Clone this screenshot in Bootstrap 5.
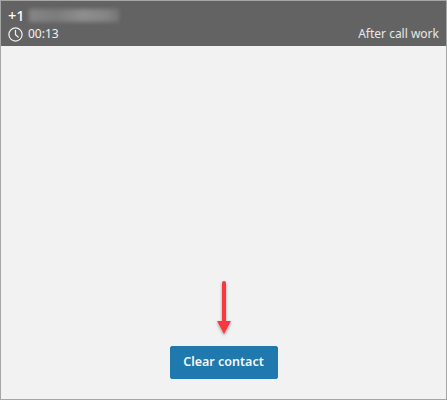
<!DOCTYPE html>
<html lang="en">
<head>
<meta charset="utf-8">
<title>After call work</title>
<link rel="stylesheet" href="https://cdn.jsdelivr.net/npm/bootstrap@5.3.0/dist/css/bootstrap.min.css">
<style>
html, body { height: 400px; overflow: hidden; }
body { font-family: "Noto Sans", "Open Sans", sans-serif; background: #f2f2f2; }
.ccp-frame { width: 447px; height: 400px; border: 1px solid #a6a6a6; background: #f2f2f2; }
.ccp-head { height: 45px; background: #636363; color: #f2f2f2; padding: 4px 7px 0 7px; font-size: 12px; line-height: 18px; }
.ccp-phone { font-size: 14.5px; font-weight: 500; color: #fff; line-height: 20px; }
.ccp-blur { width: 90px; height: 13px; background: linear-gradient(90deg, #868686, #7c7c7c 30%, #8e8e8e 60%, #858585 85%, #767676); filter: blur(2px); }
.ccp-sub { margin-top: 0; }
.ccp-time { gap: 5px; }
.ccp-status { color: #e8e8e8; }
.ccp-body { padding-bottom: 20px; }
.ccp-arrow { display: block; width: 24px; height: 60px; margin-left: 0; margin-bottom: 6px; }
.ccp-btn { width: 108px; height: 33px; padding: 0; background: #1f78ae; border: 1px solid #1f78ae; color: #f4f8fb; font-size: 12.5px; font-weight: 600; border-radius: 2px; }
</style>
</head>
<body>
<div class="ccp-frame d-flex flex-column">
  <header class="ccp-head flex-shrink-0">
    <div class="ccp-phone d-flex align-items-center gap-1"><span>+1</span><div class="ccp-blur"></div></div>
    <div class="ccp-sub d-flex justify-content-between align-items-center">
      <span class="ccp-time d-flex align-items-center">
        <svg width="15" height="15" viewBox="0 0 15 15" fill="none" stroke="#f2f2f2" stroke-width="1.2" stroke-linecap="round" stroke-linejoin="round"><circle cx="7.5" cy="7.5" r="6.6"/><path d="M7.5 3.4V7.8L10.2 10"/></svg>
        <span>00:13</span>
      </span>
      <span class="ccp-status">After call work</span>
    </div>
  </header>
  <main class="ccp-body flex-grow-1 d-flex flex-column justify-content-end align-items-center">
    <svg class="ccp-arrow" viewBox="0 0 24 60">
      <defs><filter id="sh" x="-50%" y="-20%" width="200%" height="140%"><feDropShadow dx="0" dy="1.5" stdDeviation="1.5" flood-color="#000" flood-opacity=".35"/></filter></defs>
      <g filter="url(#sh)"><path d="M12 3V42" stroke="#f8393f" stroke-width="4" stroke-linecap="round"/><path d="M5 41H19L12 54Z" fill="#f8393f"/></g>
    </svg>
    <button type="button" class="btn ccp-btn">Clear contact</button>
  </main>
</div>
<script src="https://cdn.jsdelivr.net/npm/bootstrap@5.3.0/dist/js/bootstrap.bundle.min.js"></script>
</body>
</html>
